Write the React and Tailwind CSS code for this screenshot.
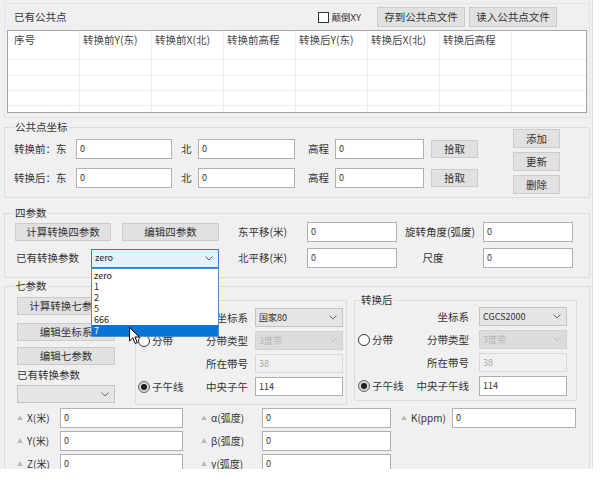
import React from 'react';

function Btn({ children, className = '' }) {
  return (
    <div className={`flex shrink-0 items-center justify-center bg-[#e1e1e1] border border-[#cbcbcb] text-[10.5px] leading-[14px] text-[#333] ${className}`}>
      {children}
    </div>
  );
}

function Field({ value = '0', className = '', disabled = false }) {
  return (
    <div className={`flex shrink-0 items-center pl-[3px] border text-[9px] leading-[12px] ${disabled ? 'bg-[#f0f0f0] border-[#d9d9d9] text-[#ababab]' : 'bg-white border-[#b0b0b0] text-[#333]'} ${className}`}>
      {value}
    </div>
  );
}

function Chevron({ color }) {
  return (
    <svg width="8" height="5" viewBox="0 0 8 5" className="shrink-0">
      <path d="M0.5 0.5 L4 4 L7.5 0.5" fill="none" stroke={color} strokeWidth="1" />
    </svg>
  );
}

function Select({ value = '', className = '', disabled = false }) {
  return (
    <div className={`flex shrink-0 items-center justify-between pl-[3px] pr-[5px] border text-[9px] leading-[12px] ${disabled ? 'bg-[#dcdcdc] border-[#d2d2d2] text-[#b4b4b4]' : 'bg-[#e5e5e5] border-[#c4c4c4] text-[#333]'} ${className}`}>
      <span>{value}</span>
      <Chevron color={disabled ? '#c0c0c0' : '#6a6a6a'} />
    </div>
  );
}

function Radio({ checked, label }) {
  return (
    <div className="flex items-center">
      <span className={`flex items-center justify-center w-[12px] h-[12px] rounded-full border ${checked ? 'border-[#666] bg-[#d6d6d6]' : 'border-[#333] bg-white'}`}>
        {checked && <span className="w-[6px] h-[6px] rounded-full bg-[#1e1e1e]" />}
      </span>
      <span className="ml-[2px] text-[10.5px] leading-[14px] text-[#333]">{label}</span>
    </div>
  );
}

function Group({ title, className = '', legendClass = 'ml-[9px]', children }) {
  return (
    <fieldset className={`border border-[#dcdcdc] min-w-0 shrink-0 ${className}`}>
      <legend className={`px-[1px] text-[10.5px] leading-[14px] text-[#333] ${legendClass}`}>{title}</legend>
      {children}
    </fieldset>
  );
}

function Tri({ children, className = '' }) {
  return (
    <div className={`flex shrink-0 items-center text-[10px] leading-[14px] text-[#333] ${className}`}>
      <span className="mr-[4px] text-[6px] text-[#b8b8b8]">▲</span>
      {children}
    </div>
  );
}

function GeoRow({ left, label, control, leftClass, labelClass, controlClass }) {
  return (
    <div className="flex items-center h-[19px]">
      <div className={`flex shrink-0 ${leftClass}`}>{left}</div>
      <span className={`shrink-0 text-right text-[10.5px] leading-[14px] text-[#333] ${labelClass}`}>{label}</span>
      <div className={controlClass}>{control}</div>
    </div>
  );
}

function Cursor() {
  return (
    <svg width="12" height="18" viewBox="0 0 12 18" className="absolute left-[37px] top-[58px]">
      <path d="M0.5 0.5 L0.5 14 L3.8 10.8 L6.2 16.5 L8.3 15.6 L5.9 10 L10.3 10 Z" fill="white" stroke="black" strokeWidth="1" strokeLinejoin="round" />
    </svg>
  );
}

const columns = ['序号', '转换前Y(东)', '转换前X(北)', '转换前高程', '转换后Y(东)', '转换后X(北)', '转换后高程', ''];
const rowHeights = ['h-[29px]', 'h-[16px]', 'h-[15px]', 'h-[15px]', 'flex-1'];

function Table() {
  return (
    <div className="ml-[2px] w-[580px] h-[83px] bg-white border border-[#a3a3a3] flex flex-col">
      {rowHeights.map((h, r) => (
        <div key={r} className={`flex ${h} ${r < 4 ? 'border-b border-[#ededed]' : ''}`}>
          {columns.map((c, i) => (
            <div key={i} className={`${i === 7 ? 'flex-1' : 'w-[72px] border-r border-[#ededed]'} ${i === 0 ? 'pl-[6px]' : 'pl-[3px]'} pt-[2px] text-[10.5px] leading-[14px] text-[#444] whitespace-nowrap`}>
              {r === 0 ? c : ''}
            </div>
          ))}
        </div>
      ))}
    </div>
  );
}

const lbl = 'shrink-0 text-[10.5px] leading-[14px] text-[#333]';

export default function App() {
  return (
    <div className="w-[600px] h-[482px] bg-white font-['Noto_Sans_CJK_SC','Noto_Sans',sans-serif]">
      <div className="w-[593px] h-[469px] bg-[#f0f0f0] border-r border-[#e0e0e0] overflow-hidden flex flex-col pl-[4px]">
        {/* 已有公共点 */}
        <div className="mt-[3px] h-[115px] w-[586px] shrink-0 border border-[#e4e4e4]">
          <div className="h-[26px] flex items-center pl-[9px] pr-[32px]">
            <span className={lbl}>已有公共点</span>
            <div className="ml-auto flex items-center">
              <span className="w-[11px] h-[11px] border border-[#333] bg-white" />
              <span className="ml-[3px] text-[9.5px] leading-[14px] text-[#333]">颠倒XY</span>
            </div>
            <Btn className="ml-[16px] w-[88px] h-[20px]">存到公共点文件</Btn>
            <Btn className="ml-[4px] w-[88px] h-[20px]">读入公共点文件</Btn>
          </div>
          <Table />
        </div>

        {/* 公共点坐标 */}
        <Group title="公共点坐标" className="mt-[2px] h-[78px] w-[586px]">
          <div className="flex pl-[9px]">
            <div className="flex flex-col pt-[5px] gap-[9px]">
              {['转换前：东', '转换后：东'].map((l) => (
                <div key={l} className="flex items-center h-[20px]">
                  <span className={`w-[62px] ${lbl}`}>{l}</span>
                  <Field className="w-[96px] h-[20px]" />
                  <span className={`ml-[9px] w-[17px] ${lbl}`}>北</span>
                  <Field className="w-[97px] h-[20px]" />
                  <span className={`ml-[13px] w-[27px] ${lbl}`}>高程</span>
                  <Field className="w-[89px] h-[20px]" />
                  <Btn className="ml-[7px] w-[47px] h-[18px]">拾取</Btn>
                </div>
              ))}
            </div>
            <div className="ml-[35px] -mt-[5px] flex flex-col gap-[4px]">
              <Btn className="w-[47px] h-[19px]">添加</Btn>
              <Btn className="w-[47px] h-[19px]">更新</Btn>
              <Btn className="w-[47px] h-[19px]">删除</Btn>
            </div>
          </div>
        </Group>

        {/* 四参数 */}
        <Group title="四参数" className="mt-[8px] h-[72px] w-[586px]">
          <div className="flex flex-col pt-[2px] gap-[6px] pl-[10px]">
            <div className="flex items-center h-[20px]">
              <Btn className="w-[96px] h-[18px]">计算转换四参数</Btn>
              <Btn className="ml-[11px] w-[97px] h-[18px]">编辑四参数</Btn>
              <span className={`ml-[19px] w-[69px] ${lbl}`}>东平移(米)</span>
              <Field className="w-[90px] h-[20px]" />
              <span className={`w-[86px] text-center ${lbl}`}>旋转角度(弧度)</span>
              <Field className="w-[90px] h-[20px]" />
            </div>
            <div className="flex items-center h-[20px]">
              <span className={`w-[76px] pl-[1px] ${lbl}`}>已有转换参数</span>
              <div className="relative z-10 flex shrink-0 items-center justify-between w-[128px] h-[19px] pl-[3px] pr-[5px] border border-[#2f7fd0] bg-[#e5f1fb] text-[9px] leading-[12px] text-[#222]">
                <span>zero</span>
                <Chevron color="#5a5a5a" />
                <div className="absolute left-[-1px] top-[18px] w-[128px] bg-white border border-[#4a8fd3] pt-[1px] flex flex-col">
                  {['zero', '1', '2', '5', '666', '7'].map((v, i) => (
                    <div key={v} className={`h-[11px] pl-[2px] text-[9px] leading-[11px] ${i === 5 ? 'bg-[#0a74d4] text-white' : 'text-[#222]'}`}>
                      {v}
                    </div>
                  ))}
                  <Cursor />
                </div>
              </div>
              <span className={`ml-[19px] w-[69px] ${lbl}`}>北平移(米)</span>
              <Field className="w-[90px] h-[20px]" />
              <span className={`w-[86px] text-center pr-[14px] ${lbl}`}>尺度</span>
              <Field className="w-[90px] h-[20px]" />
            </div>
          </div>
        </Group>

        {/* 七参数 */}
        <Group title="七参数" className="mt-[1px] h-[200px] w-[586px]">
          <div className="pl-[12px]">
            <div className="flex h-[112px]">
              <div className="flex flex-col w-[98px] shrink-0">
                <Btn className="mt-[4px] w-[98px] h-[18px]">计算转换七参数</Btn>
                <Btn className="mt-[8px] w-[98px] h-[18px]">编辑坐标系</Btn>
                <Btn className="mt-[6px] w-[98px] h-[18px]">编辑七参数</Btn>
                <span className={`mt-[3px] ${lbl}`}>已有转换参数</span>
                <Select className="mt-[3px] w-[98px] h-[18px]" />
              </div>

              <Group title="转换前" legendClass="ml-[5px]" className="ml-[20px] w-[212px] h-[112px]">
                <div className="flex flex-col pt-[1px] gap-[4px]">
                  <GeoRow leftClass="w-[64px] pl-[2px]" labelClass="w-[48px]" controlClass="ml-[7px]" label="坐标系" control={<Select value="国家80" className="w-[88px] h-[19px]" />} />
                  <GeoRow leftClass="w-[64px] pl-[2px]" labelClass="w-[48px]" controlClass="ml-[7px]" left={<Radio label="分带" />} label="分带类型" control={<Select value="3度带" disabled className="w-[88px] h-[19px]" />} />
                  <GeoRow leftClass="w-[64px] pl-[2px]" labelClass="w-[48px]" controlClass="ml-[7px]" label="所在带号" control={<Field value="38" disabled className="w-[88px] h-[19px]" />} />
                  <GeoRow leftClass="w-[64px] pl-[2px]" labelClass="w-[48px]" controlClass="ml-[7px]" left={<Radio checked label="子午线" />} label="中央子午" control={<Field value="114" className="w-[88px] h-[19px]" />} />
                </div>
              </Group>

              <Group title="转换后" legendClass="ml-[5px]" className="ml-[7px] w-[223px] h-[108px]">
                <div className="flex flex-col gap-[4px]">
                  <GeoRow leftClass="w-[59px] pl-[3px]" labelClass="w-[55px]" controlClass="ml-[10px]" label="坐标系" control={<Select value="CGCS2000" className="w-[88px] h-[19px]" />} />
                  <GeoRow leftClass="w-[59px] pl-[3px]" labelClass="w-[55px]" controlClass="ml-[10px]" left={<Radio label="分带" />} label="分带类型" control={<Select value="3度带" disabled className="w-[88px] h-[19px]" />} />
                  <GeoRow leftClass="w-[59px] pl-[3px]" labelClass="w-[55px]" controlClass="ml-[10px]" label="所在带号" control={<Field value="38" disabled className="w-[88px] h-[19px]" />} />
                  <GeoRow leftClass="w-[59px] pl-[3px]" labelClass="w-[55px]" controlClass="ml-[10px]" left={<Radio checked label="子午线" />} label="中央子午线" control={<Field value="114" className="w-[88px] h-[20px]" />} />
                </div>
              </Group>
            </div>

            <div className="mt-[3px] flex flex-col gap-[3px]">
              {[['X(米)', 'α(弧度)', true], ['Y(米)', 'β(弧度)', false], ['Z(米)', 'γ(弧度)', false]].map(([a, b, k]) => (
                <div key={a} className="flex items-center h-[20px]">
                  <Tri className="w-[43px]">{a}</Tri>
                  <Field className="w-[123px] h-[20px]" />
                  <Tri className="ml-[18px] w-[61px]">{b}</Tri>
                  <Field className="w-[129px] h-[20px]" />
                  {k && (
                    <>
                      <Tri className="ml-[10px] w-[51px]">K(ppm)</Tri>
                      <Field className="w-[124px] h-[20px]" />
                    </>
                  )}
                </div>
              ))}
            </div>
          </div>
        </Group>
      </div>
    </div>
  );
}
